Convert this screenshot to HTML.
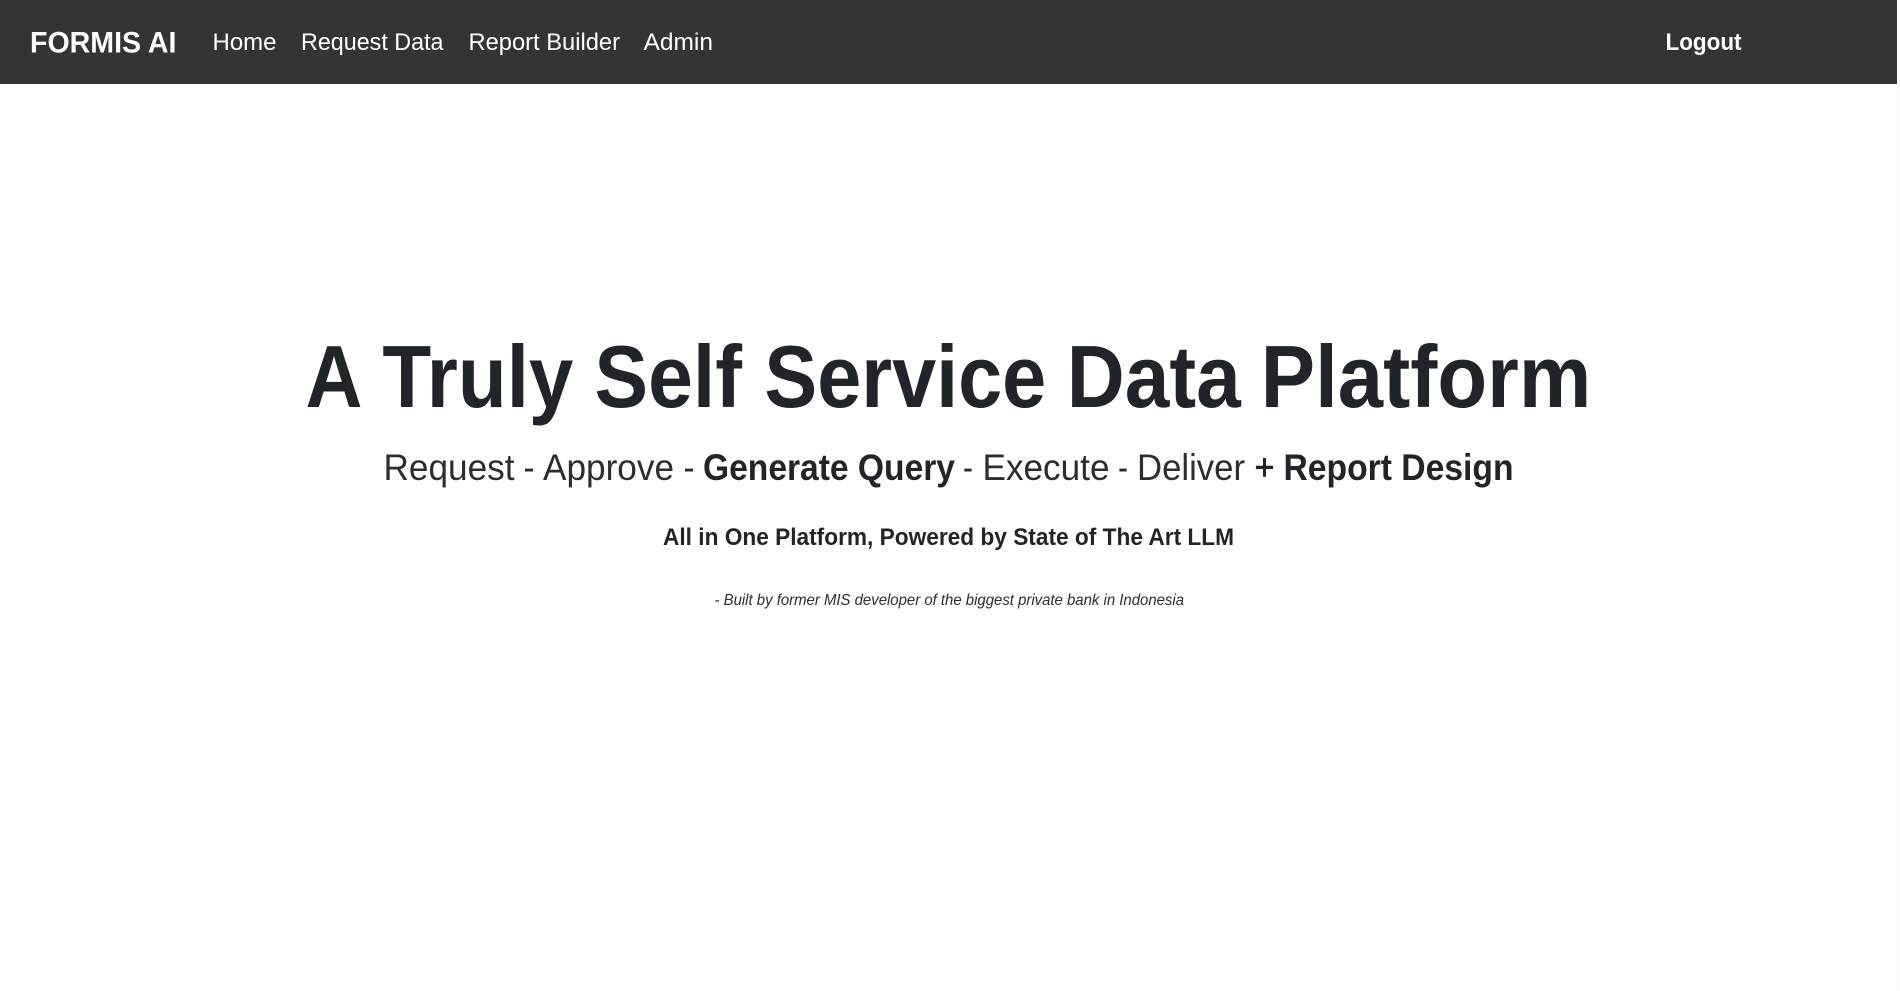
<!DOCTYPE html>
<html lang="en">
<head>
<meta charset="utf-8">
<title>FORMIS AI</title>
<style>
html,body{margin:0;padding:0;background:#fff;overflow:hidden;width:1900px;height:991px}
svg{display:block;position:absolute;left:0;top:0}
text{font-family:"Liberation Sans",Arial,sans-serif;white-space:pre}
.b{font-weight:700}
.n{fill:#fff}
.d{fill:#212529}
.l{fill:#2a2e33}
</style>
</head>
<body>
<svg width="1900" height="991" viewBox="0 0 1900 991" xmlns="http://www.w3.org/2000/svg">
<rect x="0" y="0" width="1900" height="991" fill="#fff"/>
<rect x="1897" y="0" width="3" height="991" fill="#fbfbfb"/>
<rect x="0" y="0" width="1897" height="84" fill="#343434"/>

<text class="n b" x="30" y="52.7" font-size="30" textLength="146.5" lengthAdjust="spacingAndGlyphs">FORMIS AI</text>
<text class="n" x="212.5" y="50" font-size="24.5" textLength="64" lengthAdjust="spacingAndGlyphs">Home</text>
<text class="n" x="301" y="50" font-size="24.5" textLength="142.5" lengthAdjust="spacingAndGlyphs">Request Data</text>
<text class="n" x="468.5" y="50" font-size="24.5" textLength="151.5" lengthAdjust="spacingAndGlyphs">Report Builder</text>
<text class="n" x="643.5" y="50" font-size="24.5" textLength="69.5" lengthAdjust="spacingAndGlyphs">Admin</text>
<text class="n b" x="1665.5" y="50" font-size="24" textLength="76" lengthAdjust="spacingAndGlyphs">Logout</text>

<text class="d b" x="305.5" y="407" font-size="88" textLength="57" lengthAdjust="spacingAndGlyphs">A</text>
<text class="d b" x="382.4" y="407" font-size="88" textLength="191" lengthAdjust="spacingAndGlyphs">Truly</text>
<text class="d b" x="594.4" y="407" font-size="88" textLength="147.6" lengthAdjust="spacingAndGlyphs">Self</text>
<text class="d b" x="764.4" y="407" font-size="88" textLength="281.8" lengthAdjust="spacingAndGlyphs">Service</text>
<text class="d b" x="1066.8" y="407" font-size="88" textLength="173.9" lengthAdjust="spacingAndGlyphs">Data</text>
<text class="d b" x="1260.8" y="407" font-size="88" textLength="330.5" lengthAdjust="spacingAndGlyphs">Platform</text>

<text class="l" x="383.5" y="480" font-size="37" textLength="131" lengthAdjust="spacingAndGlyphs">Request</text>
<text class="l" x="523.5" y="480" font-size="37" textLength="11" lengthAdjust="spacingAndGlyphs">-</text>
<text class="l" x="543" y="480" font-size="37" textLength="131" lengthAdjust="spacingAndGlyphs">Approve</text>
<text class="l" x="683.5" y="480" font-size="37" textLength="11" lengthAdjust="spacingAndGlyphs">-</text>
<text class="d b" x="703" y="480" font-size="37" textLength="252" lengthAdjust="spacingAndGlyphs">Generate Query</text>
<text class="l" x="963" y="480" font-size="37" textLength="10" lengthAdjust="spacingAndGlyphs">-</text>
<text class="l" x="982.5" y="480" font-size="37" textLength="127" lengthAdjust="spacingAndGlyphs">Execute</text>
<text class="l" x="1118" y="480" font-size="37" textLength="10" lengthAdjust="spacingAndGlyphs">-</text>
<text class="l" x="1137" y="480" font-size="37" textLength="108" lengthAdjust="spacingAndGlyphs">Deliver</text>
<text class="d" x="1254.5" y="480" font-size="37" stroke="#212529" stroke-width="0.6" textLength="20" lengthAdjust="spacingAndGlyphs">+</text>
<text class="d b" x="1283.5" y="480" font-size="37" textLength="230" lengthAdjust="spacingAndGlyphs">Report Design</text>

<text class="d b" x="663" y="545" font-size="24.5" textLength="571" lengthAdjust="spacingAndGlyphs">All in One Platform, Powered by State of The Art LLM</text>

<text class="l" x="714.5" y="605" font-size="16" font-style="italic" textLength="469.5" lengthAdjust="spacingAndGlyphs">- Built by former MIS developer of the biggest private bank in Indonesia</text>
</svg>
</body>
</html>
